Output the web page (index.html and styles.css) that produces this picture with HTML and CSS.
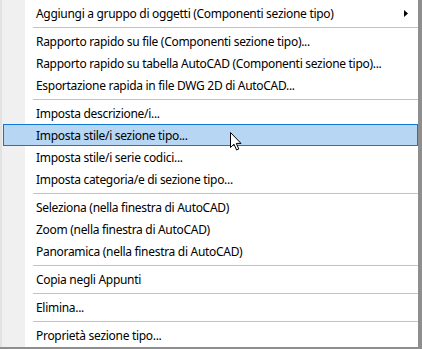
FILE: index.html
```html
<!DOCTYPE html>
<html lang="it">
<head>
    <meta charset="UTF-8">
    <title>Menu sezione tipo</title>
    <link rel="stylesheet" href="styles.css">
</head>
<body>
    <div class="menu">
        <div class="item">
            <span class="label">Aggiungi a gruppo di oggetti (Componenti sezione tipo)</span>
            <svg class="sub-arrow" width="4" height="7" viewBox="0 0 4 7"><path d="M0 0L4 3.5L0 7Z"/></svg>
        </div>
        <div class="sep"></div>
        <div class="item"><span class="label">Rapporto rapido su file (Componenti sezione tipo)...</span></div>
        <div class="item"><span class="label">Rapporto rapido su tabella AutoCAD (Componenti sezione tipo)...</span></div>
        <div class="item"><span class="label">Esportazione rapida in file DWG 2D di AutoCAD...</span></div>
        <div class="sep"></div>
        <div class="item"><span class="label">Imposta descrizione/i...</span></div>
        <div class="item active"><span class="label">Imposta stile/i sezione tipo...</span></div>
        <div class="item"><span class="label">Imposta stile/i serie codici...</span></div>
        <div class="item"><span class="label">Imposta categoria/e di sezione tipo...</span></div>
        <div class="sep"></div>
        <div class="item"><span class="label">Seleziona (nella finestra di AutoCAD)</span></div>
        <div class="item"><span class="label">Zoom (nella finestra di AutoCAD)</span></div>
        <div class="item"><span class="label">Panoramica (nella finestra di AutoCAD)</span></div>
        <div class="sep"></div>
        <div class="item"><span class="label">Copia negli Appunti</span></div>
        <div class="sep"></div>
        <div class="item"><span class="label">Elimina...</span></div>
        <div class="sep"></div>
        <div class="item"><span class="label">Proprietà sezione tipo...</span></div>
    </div>

    <!-- mouse pointer over the highlighted entry -->
    <svg class="cursor" width="13" height="19" viewBox="0 0 13 19">
        <path d="M0.5 0.5L0.5 15.5L4 12.2L6.6 18L8.8 17L6.3 11.4L11 11.4Z" fill="#fff" stroke="#000" stroke-width="1" stroke-linejoin="miter"/>
    </svg>
</body>
</html>
```

FILE: styles.css
```css
html, body {
    margin: 0;
    padding: 0;
}

body {
    width: 422px;
    height: 349px;
    overflow: hidden;
    position: relative;
    background: #fff;
    font-family: "Noto Sans", "Open Sans", sans-serif;
    font-size: 12px;
    letter-spacing: -0.3px;
    color: #000;
}

.menu {
    width: 418px;
    padding: 2px 0 1px;
    background: linear-gradient(to right, #e2e2e2 0 2px, #f0f0f0 2px 25px, #fff 25px);
    border-right: 4px solid #8e8e8e;
    border-bottom: 2px solid #8e8e8e;
}

.item {
    height: 22px;
    margin-left: 3px;
    padding-left: 32px;
    border: 1px solid transparent;
    box-sizing: border-box;
    display: flex;
    align-items: center;
    white-space: nowrap;
}

.item.active {
    background: #b7d6f3;
    border-color: #0f78d6;
}

.sub-arrow {
    margin-left: auto;
    margin-right: 9px;
}

.sep {
    height: 6px;
    padding-top: 3px;
    margin-left: 33px;
    box-sizing: border-box;
}

.sep::before {
    content: "";
    display: block;
    height: 1px;
    background: #c3c3c3;
}

.cursor {
    position: absolute;
    left: 230px;
    top: 132px;
}
```
